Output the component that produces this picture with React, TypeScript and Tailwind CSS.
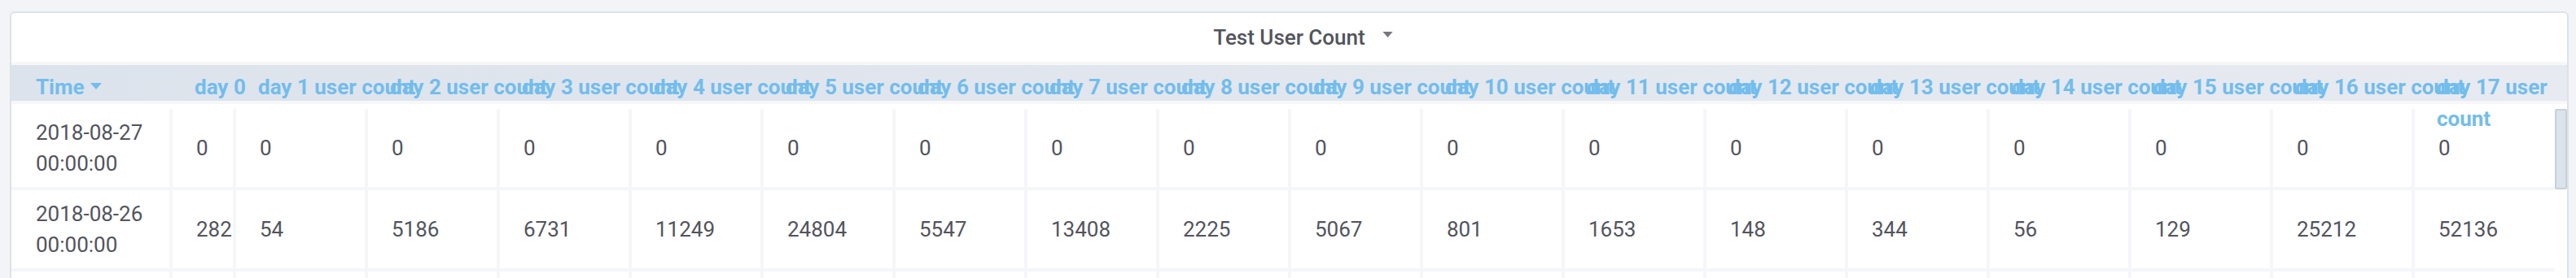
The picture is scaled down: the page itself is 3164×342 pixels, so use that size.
const ROW_TIMES = ["2018-08-27 00:00:00", "2018-08-26 00:00:00"];

const ROWS: number[][] = [
  [0, 0, 0, 0, 0, 0, 0, 0, 0, 0, 0, 0, 0, 0, 0, 0, 0, 0],
  [282, 54, 5186, 6731, 11249, 24804, 5547, 13408, 2225, 5067, 801, 1653, 148, 344, 56, 129, 25212, 52136],
];

const DAYS = Array.from({ length: 18 }, (_, i) => i);

// column widths include the 4px right separator (last column has none)
const widthOf = (i: number) =>
  i === 0 ? "w-[78px]" : i < 10 ? "w-[162px]" : i < 17 ? "w-[174px]" : "w-[172px]";

function Caret({ className, color }: { className?: string; color: string }) {
  return (
    <svg viewBox="0 0 14 8" className={className}>
      <polygon points="0,0 14,0 7,8" fill={color} />
    </svg>
  );
}

function HeaderRow() {
  return (
    <div className="relative z-10 h-[58px]">
      <div className="absolute inset-x-0 top-0 h-[52px] border-y-4 border-[#f6f7f9] bg-linear-to-r from-[#dde3ec] to-[#e7eaf0]" />
      <div className="relative flex text-[26px] font-bold leading-[39px] text-[#72bdec]">
        <div className="w-[198px] shrink-0 pl-[30px] pt-[12px] whitespace-nowrap">
          Time
          <Caret className="relative top-[-3px] ml-[7px] inline-block h-[8px] w-[14px] align-middle" color="#72bdec" />
        </div>
        {DAYS.map((d) => (
          <div key={d} className={`${widthOf(d)} shrink-0 pl-[27px] pt-[12px] whitespace-nowrap`}>
            {d === 0 ? (
              "day 0"
            ) : d === 17 ? (
              <>
                day 17 user
                <br />
                count
              </>
            ) : (
              `day ${d} user count`
            )}
          </div>
        ))}
      </div>
    </div>
  );
}

function BodyRow({ time, values }: { time?: string; values?: number[] }) {
  return (
    <div className="flex min-h-[100px]">
      <div className="flex w-[198px] shrink-0 items-center border-r-4 border-b-4 border-[#f5f6f8] py-[10px] pr-[20px] pl-[30px]">
        {time}
      </div>
      {DAYS.map((i) => (
        <div
          key={i}
          className={`${widthOf(i)} flex shrink-0 items-center border-b-4 border-[#f5f6f8] py-[10px] pl-[29px] ${
            i === 17 ? "" : "border-r-4"
          }`}
        >
          {values?.[i]}
        </div>
      ))}
    </div>
  );
}

export default function App() {
  return (
    <div className="h-[342px] w-[3164px] overflow-hidden bg-[#f3f4f7] pt-[14px] pr-[9px] pl-[12px] font-['Roboto',sans-serif]">
      <div className="h-[400px] rounded-[6px] border-2 border-[#dce2ea] bg-white">
        <div className="h-[60px] text-center text-[26px] leading-[60px] font-medium text-[#52545c]">
          <span className="relative inline-block">
            Test User Count
            <Caret className="absolute top-[23px] left-full ml-[20px] h-[7px] w-[15px]" color="#74777d" />
          </span>
        </div>
        <HeaderRow />
        <div className="flex">
          <div className="w-[3124px] shrink-0 text-[26px] leading-[38px] text-[#52545c]">
            {ROW_TIMES.map((t, r) => (
              <BodyRow key={t} time={t} values={ROWS[r]} />
            ))}
            {/* next row, below the visible area */}
            <BodyRow />
          </div>
          <div className="w-[15px] shrink-0">
            <div className="h-[99px] rounded-[2px] border-2 border-[#c9d0d9] bg-[#dde3ea]" />
          </div>
        </div>
      </div>
    </div>
  );
}
